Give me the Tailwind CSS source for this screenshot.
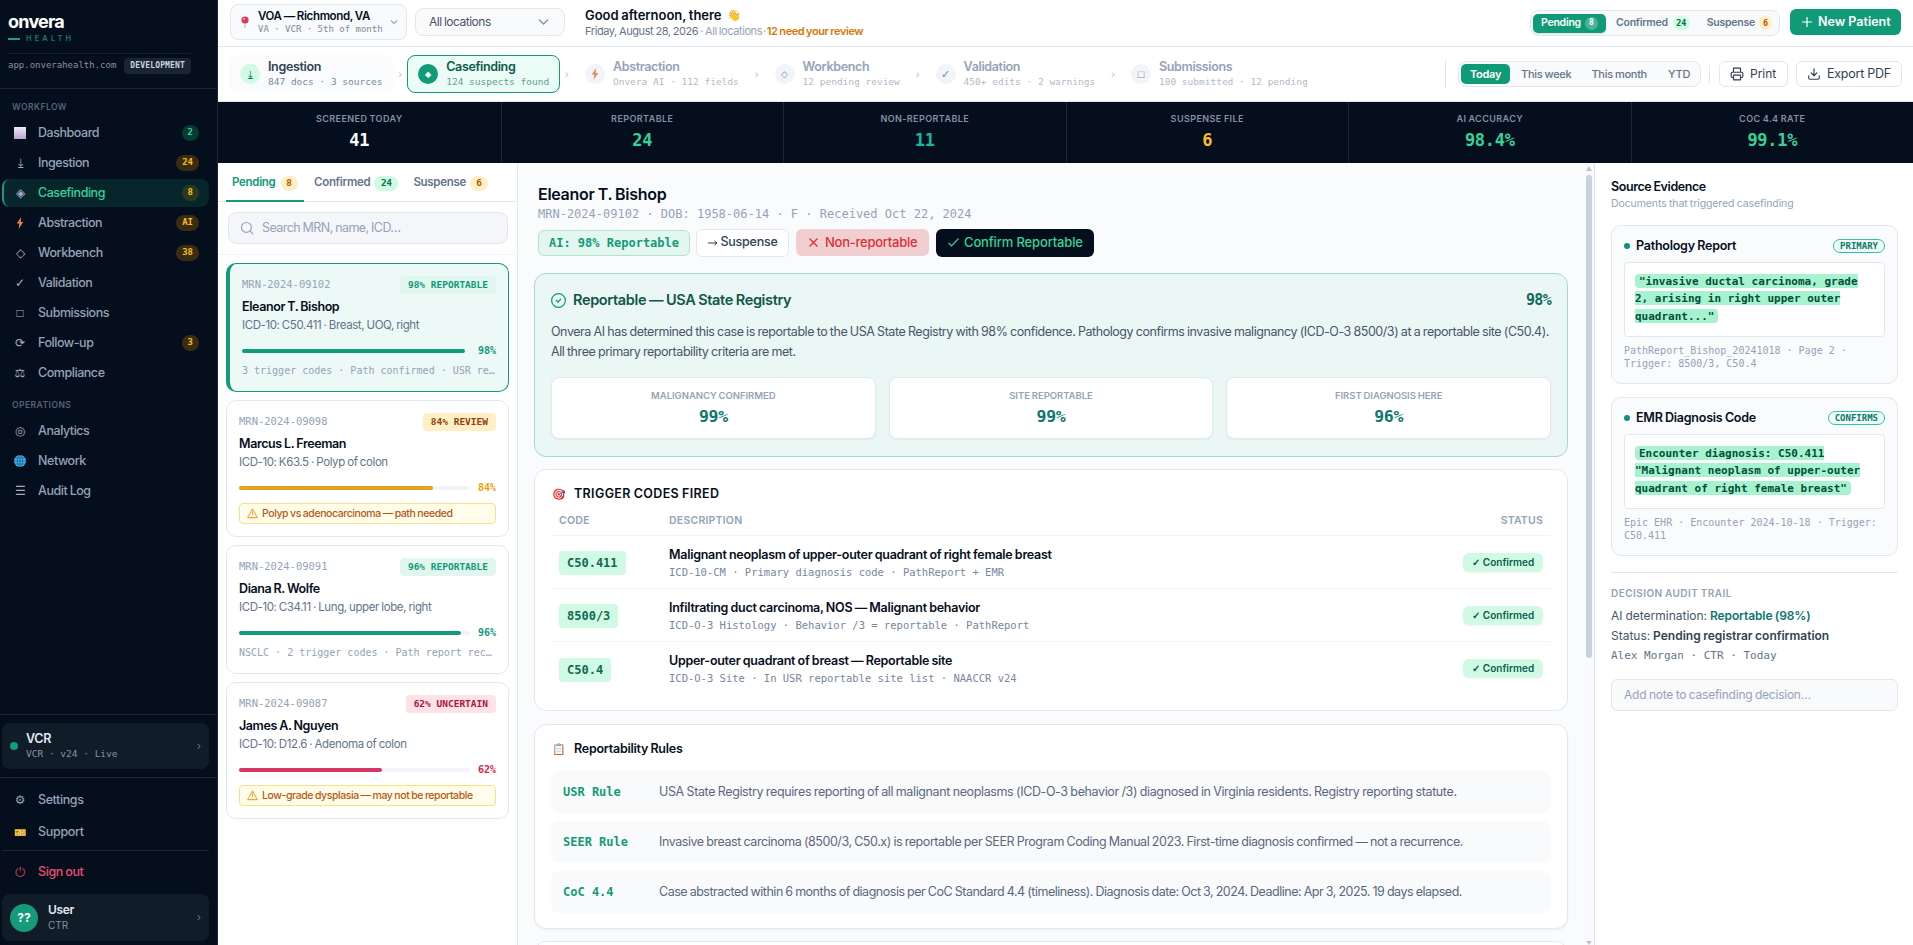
<!DOCTYPE html>
<html lang="en">

<head>
    <meta charset="UTF-8">
    <meta name="viewport" content="width=device-width, initial-scale=1.0">
    <title>Onvera Health - Casefinding</title>
    <script src="https://cdn.jsdelivr.net/npm/@tailwindcss/browser@4"></script>
</head>

<body class="flex w-[1913px] h-[945px] overflow-hidden bg-white font-[Inter,sans-serif] [word-spacing:-0.5px] text-[#050e1c]">

    <!-- Sidebar -->
    <aside class="w-[218px] shrink-0 h-full flex flex-col bg-[#050e1c] border-r border-[#1c2634]">
        <div class="h-[89px] shrink-0 border-b border-[#1c2634] pl-2 pr-[26px] pt-[10px]">
            <div class="h-[22px] leading-[23px] text-[18px] font-bold text-white tracking-[-0.78px]">onvera</div>
            <div class="flex items-center gap-[6px] h-[12px] mt-[1px]">
                <span class="w-3 h-[2px] bg-[#1f9f82]"></span>
                <span class="text-[7.5px] leading-[12px] font-semibold tracking-[3.1px] text-[#1b7f6b]">HEALTH</span>
            </div>
            <div class="mt-[8px] border-t border-[#141e2c] pt-1 flex items-center justify-between">
                <span class="font-['DejaVu_Sans_Mono',monospace] text-[9px] text-[#8793a5]">app.onverahealth.com</span>
                <span class="h-4 leading-4 px-[6px] rounded bg-[#1a2432] font-['DejaVu_Sans_Mono',monospace] text-[8px] font-bold tracking-[0.15px] text-[#cbd5e1]">DEVELOPMENT</span>
            </div>
        </div>
        <div class="mt-3 h-3 pl-3 text-[8.5px] leading-[13px] font-semibold tracking-[0.47px] text-[#566378]">WORKFLOW</div>
        <nav id="nav-workflow" class="mt-[6px] flex flex-col gap-[2px]"></nav>
        <div class="mt-3 h-3 pl-3 text-[8.5px] leading-[13px] font-semibold tracking-[0.47px] text-[#566378]">OPERATIONS</div>
        <nav id="nav-operations" class="mt-[6px] flex flex-col gap-[2px]"></nav>

        <div class="mt-auto border-t border-[#1c2634] py-2 pl-[2px] pr-2">
            <div class="h-[46px] rounded-lg bg-[#111c29] flex items-center px-2">
                <span class="size-2 rounded-full bg-[#149b79]"></span>
                <div class="ml-2 flex-1">
                    <div class="text-[12.5px] leading-[15px] font-semibold tracking-[-0.3px] text-[#e2e8f0]">VCR</div>
                    <div class="font-['DejaVu_Sans_Mono',monospace] [word-spacing:0px] text-[9.5px] leading-[15px] text-[#8793a5]">VCR · v24 · Live</div>
                </div>
                <span class="text-[11px] text-[#64748b]">›</span>
            </div>
        </div>
        <div class="border-t border-[#1c2634] pt-[7px] pb-1 pl-[2px] pr-2">
            <div class="h-[30px] flex items-center pl-3 text-[12.5px] font-medium tracking-[-0.4px] text-[#94a3b8]"><span class="w-3 font-['DejaVu_Sans'] text-[12px] flex justify-center">⚙</span><span class="ml-3">Settings</span></div>
            <div class="mt-[2px] h-[30px] flex items-center pl-3 text-[12.5px] font-medium tracking-[-0.3px] text-[#94a3b8]"><span class="w-3 text-[10px] flex justify-center">🎫</span><span class="ml-3">Support</span></div>
            <div class="mt-[3px] border-t border-[#1c2634] h-[7px]"></div>
            <div class="h-[30px] flex items-center pl-3 pt-px text-[12.5px] font-medium tracking-[-0.4px] text-[#e5506f]"><span class="w-3 font-sans text-[13px] flex justify-center opacity-80">⏻</span><span class="ml-3">Sign out</span></div>
            <div class="mt-[7px] h-[47px] rounded-lg bg-[#111c29] flex items-center px-2">
                <span class="size-7 rounded-full bg-[#149b79] flex items-center justify-center text-[12px] font-bold text-white">??</span>
                <div class="ml-[10px] flex-1">
                    <div class="text-[12px] leading-[16px] font-semibold tracking-[-0.3px] text-[#e2e8f0]">User</div>
                    <div class="text-[10px] leading-[15px] text-[#8793a5]">CTR</div>
                </div>
                <span class="text-[11px] text-[#64748b]">›</span>
            </div>
        </div>
    </aside>

    <div class="flex-1 min-w-0 flex flex-col">
        <!-- Top bar -->
        <header class="h-[47px] shrink-0 border-b border-[#e2e8f0] flex items-center px-3 pb-[2px]">
            <div class="w-[177px] h-9 rounded-lg border border-[#e2e8f0] bg-[#f8fafc] flex items-center pl-[8px] pr-2">
                <svg class="w-3 h-[12px]" viewBox="0 0 12 12"><path d="M5.600 6h.8v6h-.8z" fill="#9aa3ad" /><circle cx="6" cy="4" r="3.600" fill="#dc3a5e" /><circle cx="5" cy="3" r="1" fill="#f59ab0" /></svg>
                <div class="ml-[7px] flex-1">
                    <div class="text-[11.5px] leading-[14px] font-semibold tracking-[-0.36px] whitespace-nowrap">VOA — Richmond, VA</div>
                    <div class="font-['DejaVu_Sans_Mono',monospace] [word-spacing:0px] text-[9px] leading-[13px] text-[#7c899b] whitespace-nowrap">VA · VCR · 5th of month</div>
                </div>
                <svg class="size-2" viewBox="0 0 8 8" fill="none" stroke="#94a3b8" stroke-width="1.1"><path d="M1 2.5l3 3 3-3" /></svg>
            </div>
            <div class="ml-2 w-[150px] h-[28px] rounded-lg border border-[#e2e8f0] bg-[#f8fafc] flex items-center justify-between pl-[13px] pr-[15px]">
                <span class="text-[12px] tracking-[-0.5px] text-[#475569]">All locations</span>
                <svg class="w-[11px] h-[8px]" viewBox="0 0 11 8" fill="none" stroke="#8492a6" stroke-width="1.3"><path d="M1 1.5l4.5 4.5L10 1.5" /></svg>
            </div>
            <div class="ml-5">
                <div class="text-[13px] leading-[17px] font-semibold tracking-[-0.03px] flex items-center">Good afternoon, there <span class="ml-[5px] text-[11px]">👋</span></div>
                <div class="text-[11px] leading-[14px] tracking-[-0.42px] text-[#64748b] flex whitespace-nowrap">Friday, August 28, 2026<span class="text-[#94a3b8] ml-[2px]">·</span><span class="ml-[2px] text-[#94a3b8]">All locations</span><span class="text-[#94a3b8] ml-[1px]">·</span><span class="ml-[1px] font-semibold text-[#d97706]">12 need your review</span></div>
            </div>
            <div class="ml-auto w-[250px] h-[26px] mt-[2px] rounded-lg border border-[#e2e8f0] bg-[#f8fafc] flex items-center pl-[2px] text-[10.5px] font-semibold tracking-[-0.25px] text-[#64748b]">
                <span class="h-[19px] w-[73px] rounded-[5px] bg-[#119a77] text-white flex items-center pl-2 shadow-sm">Pending<span class="ml-1 w-[13px] h-[13px] rounded-full bg-white/25 flex items-center justify-center font-['DejaVu_Sans_Mono',monospace] text-[8px] font-bold">8</span></span>
                <span class="ml-[10px] flex items-center">Confirmed<span class="ml-[5px] w-[17px] h-[14px] rounded-full bg-[#d1fae5] flex items-center justify-center font-['DejaVu_Sans_Mono',monospace] text-[8.5px] font-bold text-[#067052]">24</span></span>
                <span class="ml-[17px] flex items-center">Suspense<span class="ml-[4px] w-[13px] h-[14px] rounded-full bg-[#fef0c4] flex items-center justify-center font-['DejaVu_Sans_Mono',monospace] text-[8.5px] font-bold text-[#b45309]">6</span></span>
            </div>
            <button class="ml-[10px] w-[111px] h-[26px] rounded-md bg-[#119a77] text-white text-[12.5px] font-semibold flex items-center pl-3">
                <svg class="size-[10px]" viewBox="0 0 10 10" stroke="currentColor" stroke-width="1.2"><path d="M5 0v10M0 5h10" /></svg>
                <span class="ml-[6px]">New Patient</span>
            </button>
        </header>

        <!-- Pipeline steps -->
        <div class="h-[55px] shrink-0 border-b border-[#e2e8f0] flex items-center pl-[11px] pr-[11px]">
            <div id="steps" class="flex items-center"></div>
            <div class="ml-auto w-px h-7 bg-[#e2e8f0]"></div>
            <div class="ml-[12px] w-[243px] h-[26px] rounded-lg border border-[#e2e8f0] bg-[#f8fafc] flex items-center pl-[2px] text-[11px] font-medium tracking-[-0.28px] text-[#64748b]">
                <span class="w-[49px] h-[20px] rounded-[5px] bg-[#119a77] text-white font-semibold flex items-center justify-center">Today</span>
                <span class="ml-[11px]">This week</span>
                <span class="ml-[20px]">This month</span>
                <span class="ml-[21px]">YTD</span>
            </div>
            <div class="ml-[8px] w-px h-[18px] bg-[#e2e8f0]"></div>
            <button class="ml-[9px] w-[69px] h-[26px] rounded-md border border-[#e2e8f0] flex items-center pl-[10px] text-[12px] text-[#334155]">
                <svg class="size-[14px]" viewBox="0 0 24 24" fill="none" stroke="currentColor" stroke-width="2" stroke-linejoin="round"><path d="M6 9V2h12v7M6 18H4a2 2 0 0 1-2-2v-5a2 2 0 0 1 2-2h16a2 2 0 0 1 2 2v5a2 2 0 0 1-2 2h-2M6 14h12v8H6z" /></svg>
                <span class="ml-[6px]">Print</span>
            </button>
            <button class="ml-2 w-[106px] h-[26px] rounded-md border border-[#e2e8f0] flex items-center pl-[10px] text-[12.5px] tracking-[-0.25px] text-[#334155]">
                <svg class="size-[14px]" viewBox="0 0 24 24" fill="none" stroke="currentColor" stroke-width="2" stroke-linecap="round" stroke-linejoin="round"><path d="M21 15v4a2 2 0 0 1-2 2H5a2 2 0 0 1-2-2v-4M7 10l5 5 5-5M12 15V3" /></svg>
                <span class="ml-[6px]">Export PDF</span>
            </button>
        </div>

        <!-- KPI strip -->
        <div id="kpis" class="h-[61px] shrink-0 bg-[#050e1c] grid grid-cols-6"></div>

        <div class="flex-1 min-h-0 flex">
            <!-- Case list -->
            <section class="w-[300px] shrink-0 border-r border-[#e2e8f0]">
                <div class="h-[39px] border-b border-[#e2e8f0] flex items-center pl-2 text-[11.5px] font-semibold tracking-[-0.3px] text-[#64748b]">
                    <div class="h-[39px] w-[78px] pl-[6px] pt-[4px] border-b-2 border-[#119a77] text-[#119a77] flex items-center">Pending<span class="ml-[5px] w-[17px] h-[15px] rounded-full bg-[#fef0c4] flex items-center justify-center font-['DejaVu_Sans_Mono',monospace] text-[9.5px] font-bold text-[#b45309]">8</span></div>
                    <div class="ml-[10px] pt-[2px] flex items-center">Confirmed<span class="ml-[4px] w-[24px] h-[15px] rounded-full bg-[#d1fae5] flex items-center justify-center font-['DejaVu_Sans_Mono',monospace] text-[9.5px] font-bold text-[#067052]">24</span></div>
                    <div class="ml-[15px] pt-[2px] flex items-center">Suspense<span class="ml-[4px] w-[18px] h-[15px] rounded-full bg-[#fef0c4] flex items-center justify-center font-['DejaVu_Sans_Mono',monospace] text-[9.5px] font-bold text-[#b45309]">6</span></div>
                </div>
                <div class="h-[53px] border-b border-[#f1f5f9] pt-[10px] pl-[10px] pr-[9px]">
                    <div class="h-8 rounded-lg border border-[#e2e8f0] bg-[#f4f6fa] flex items-center pl-[11px] text-[12.5px] tracking-[-0.56px] text-[#94a3b8]">
                        <svg class="size-[14px]" viewBox="0 0 24 24" fill="none" stroke="currentColor" stroke-width="2" stroke-linecap="round"><circle cx="11" cy="11" r="8.5" /><path d="M22 22l-4.5-4.5" /></svg>
                        <span class="ml-2">Search MRN, name, ICD…</span>
                    </div>
                </div>
                <div id="cases" class="pt-2 pl-2 pr-2 flex flex-col gap-[8.5px]"></div>
            </section>

            <!-- Case detail -->
            <main class="flex-1 min-w-0 flex bg-[#fafbfd] overflow-hidden">
                <div class="flex-1 min-w-0 pl-4 pr-[18px] pt-[19px]">
                    <div class="pl-1">
                        <h1 class="text-[16px] leading-[24px] font-semibold tracking-[-0.3px]">Eleanor T. Bishop</h1>
                        <div class="font-['DejaVu_Sans_Mono',monospace] [word-spacing:0px] text-[12px] leading-4 text-[#94a3b8]">MRN-2024-09102 · DOB: 1958-06-14 · F · Received Oct 22, 2024</div>
                        <div class="mt-[7px] h-[27px] flex items-center text-[13px] font-medium">
                            <span class="w-[152px] h-[26px] rounded-md border border-[#b0e2d0] bg-[#e4f6f0] flex items-center justify-center font-['DejaVu_Sans_Mono',monospace] [word-spacing:0px] text-[12px] font-bold text-[#119a77]">AI: 98% Reportable</span>
                            <button class="ml-[6px] w-[93px] h-[28px] rounded-md border border-[#e2e8f0] bg-white flex items-center justify-center gap-[3px] text-[12.5px] tracking-[-0.25px] text-[#334155]"><svg class="w-[10px] h-[6px]" viewBox="0 0 10 6" fill="none" stroke="currentColor"><path d="M0 3h9M6.500 1L9 3 6.500 5" /></svg>Suspense</button>
                            <button class="ml-[7px] w-[133px] h-[27px] rounded-md bg-[#f1cfd1] text-[#dc2f34] flex items-center pl-[13px] tracking-[-0.25px]">
                                <svg class="size-[9px]" viewBox="0 0 9 9" stroke="currentColor" stroke-width="1.2"><path d="M.5.5l8 8M8.500.5l-8 8" /></svg>
                                <span class="ml-[7px]">Non-reportable</span>
                            </button>
                            <button class="ml-[7px] w-[158px] h-[28px] rounded-md bg-[#050e1c] text-[#34d399] flex items-center pl-[12px] tracking-[-0.15px]">
                                <svg class="w-[11px] h-[9px]" viewBox="0 0 11 9" fill="none" stroke="currentColor" stroke-width="1.2"><path d="M.5 5l3 3L10.500.5" /></svg>
                                <span class="ml-[5px]">Confirm Reportable</span>
                            </button>
                        </div>
                    </div>

                    <div class="mt-[17px] h-[184px] rounded-xl border border-[#a7d8c8] bg-[#ebf7f5] px-4 pt-[14px]">
                        <div class="h-6 flex items-center">
                            <svg class="size-[15px]" viewBox="0 0 24 24" fill="none" stroke="#119a77" stroke-width="2" stroke-linecap="round" stroke-linejoin="round"><circle cx="12" cy="12" r="11" /><path d="M8.500 12l2.500 2.500 4.500-4.500" /></svg>
                            <span class="ml-[7px] text-[14.5px] font-semibold tracking-[-0.35px] text-[#0f5548]">Reportable — USA State Registry</span>
                            <span class="ml-auto font-['DejaVu_Sans_Mono',monospace] text-[15px] font-bold tracking-[-0.7px] text-[#0f6b5c]">98%</span>
                        </div>
                        <p class="mt-[10px] text-[12.5px] leading-[20.2px] tracking-[-0.435px] text-[#475569]"><span class="whitespace-nowrap">Onvera AI has determined this case is reportable to the USA State Registry with 98% confidence. Pathology confirms invasive malignancy (ICD-O-3 8500/3) at a reportable site (C50.4).</span><br>All three primary reportability criteria are met.</p>
                        <div id="criteria" class="mt-[14.600px] grid grid-cols-3 gap-[13px]"></div>
                    </div>

                    <div class="mt-3 h-[242px] rounded-xl border border-[#e2e8f0] bg-white px-4 pt-[16px]">
                        <div class="h-4 flex items-center pl-[2px]"><span class="w-3 text-[11px] flex justify-center">🎯</span><span class="ml-[9px] text-[12.5px] font-semibold tracking-[0.35px]">TRIGGER CODES FIRED</span></div>
                        <div class="h-[34px] border-b border-[#f1f5f9] pt-[5px] flex items-center px-2 text-[10.5px] font-semibold tracking-[0.22px] text-[#94a3b8]">
                            <span class="w-[110px]">CODE</span><span>DESCRIPTION</span><span class="ml-auto">STATUS</span>
                        </div>
                        <div id="codes" class="divide-y divide-[#f1f5f9]"></div>
                    </div>

                    <div class="mt-[13px] h-[205px] rounded-xl border border-[#e2e8f0] bg-white shadow-xs px-4 pt-4">
                        <div class="h-4 flex items-center pl-[2px]"><span class="w-3 text-[11px] flex justify-center">📋</span><span class="ml-[9px] text-[12.5px] font-semibold tracking-[-0.25px]">Reportability Rules</span></div>
                        <div id="rules" class="mt-[14px] flex flex-col gap-2"></div>
                    </div>
                    <div class="mt-[12px] h-10 rounded-xl border border-[#e2e8f0] bg-white"></div>
                </div>
                <!-- Scrollbar -->
                <div class="w-[8px] shrink-0 flex flex-col items-start bg-[#f8fafc]">
                    <svg class="mt-[3px] w-[6px] h-[5px]" viewBox="0 0 6 5" fill="#c0c5cc"><path d="M3 0l3 5H0z" /></svg>
                    <div class="mt-[4px] w-[6px] h-[483px] rounded-full bg-[#c8d3df]"></div>
                    <svg class="mt-auto w-[6px] h-[4px]" viewBox="0 0 6 4" fill="#c0c5cc"><path d="M0 0h6L3 4z" /></svg>
                </div>
            </main>

            <!-- Evidence panel -->
            <section class="w-[319px] shrink-0 border-l border-[#dbe3ec] pl-4 pr-[15px] pt-[15px]">
                <div class="text-[12.5px] leading-[18px] font-semibold tracking-[-0.42px]">Source Evidence</div>
                <div class="text-[10.5px] leading-[16px] tracking-[-0.1px] text-[#94a3b8]">Documents that triggered casefinding</div>
                <div id="evidence" class="mt-[13px] flex flex-col gap-[13px]"></div>
                <div class="mt-[16px] border-t border-[#e2e8f0]"></div>
                <div class="mt-[13px] text-[10px] leading-[14px] font-semibold tracking-[0.45px] text-[#94a3b8]">DECISION AUDIT TRAIL</div>
                <div class="mt-[6px] text-[12px] leading-[20px] text-[#475569]">AI determination: <b class="font-semibold tracking-[-0.1px] text-[#0f766e]">Reportable (98%)</b></div>
                <div class="text-[12px] leading-[20px] text-[#475569]">Status: <b class="font-semibold text-[#334155]">Pending registrar confirmation</b></div>
                <div class="font-['DejaVu_Sans_Mono',monospace] [word-spacing:0px] text-[11px] leading-[19px] text-[#64748b]">Alex Morgan · CTR · Today</div>
                <div class="mt-[14px] h-[32px] rounded-md border border-[#e2e8f0] bg-[#f8fafc] flex items-center pl-3 text-[12px] tracking-[-0.24px] text-[#94a3b8]">Add note to casefinding decision…</div>
            </section>
        </div>
    </div>

    <script>
        const amber = 'bg-[#3a2c12] text-[#fbbf24]';
        const green = 'bg-[#063a33] text-[#34d399]';

        const bolt = '<svg class="w-[8px] h-[12px]" viewBox="0 0 8 12" fill="#ef8450"><path d="M5.200 0L.8 6.600h2.600L2.600 12l4.600-7H4.600z" /></svg>';
        const globe = '<svg class="size-3" viewBox="0 0 12 12" fill="none" stroke="#12608f" stroke-width=".7"><circle cx="6" cy="6" r="6" fill="#46b1ef" stroke="none" /><ellipse cx="6" cy="6" rx="2.700" ry="5.700" /><path d="M6 0v12M0 6h12M1 3h10M1 9h10" /></svg>';

        const workflow = [
            { icon: '<span class="size-3 bg-linear-to-b from-[#f3e8fb] to-[#b9a5d0]"></span>', label: 'Dashboard', badge: '2', tone: green },
            { icon: '⤓', label: 'Ingestion', badge: '24', tone: amber },
            { icon: '◈', label: 'Casefinding', badge: '8', tone: 'bg-[#2a3a1e] text-[#fbbf24]', active: true },
            { icon: bolt, label: 'Abstraction', badge: 'AI', tone: amber },
            { icon: '◇', label: 'Workbench', badge: '38', tone: amber },
            { icon: '✓', label: 'Validation' },
            { icon: '□', label: 'Submissions' },
            { icon: '⟳', label: 'Follow-up', badge: '3', tone: amber },
            { icon: '<span class="font-[\'DejaVu_Sans\']">⚖</span>', label: 'Compliance' }
        ];
        const operations = [
            { icon: '◎', label: 'Analytics' },
            { icon: globe, label: 'Network' },
            { icon: '☰', label: 'Audit Log' }
        ];

        function navItem(item) {
            const state = item.active
                ? 'bg-[#07262b] border-[#149b79] text-[#34d399]'
                : 'border-transparent text-[#94a3b8]';
            const badge = item.badge
                ? `<span class="ml-auto h-4 min-w-[17px] px-[6px] rounded-full flex items-center justify-center font-['DejaVu_Sans_Mono',monospace] text-[9px] font-bold tracking-normal ${item.tone}">${item.badge}</span>`
                : '';
            return `<a class="ml-[2px] w-[207px] h-7 rounded-lg border-l-2 pl-[10px] pr-[10px] flex items-center text-[12.5px] font-medium tracking-[-0.45px] ${state}">
                <span class="w-3 font-sans text-[12px] flex justify-center text-[#a3afc0] tracking-normal">${item.icon}</span><span class="ml-3 pt-px">${item.label}</span>${badge}</a>`;
        }
        document.getElementById('nav-workflow').innerHTML = workflow.map(navItem).join('');
        document.getElementById('nav-operations').innerHTML = operations.map(navItem).join('');

        const steps = [
            { icon: '⤓', title: 'Ingestion', sub: '847 docs · 3 sources', state: 'done' },
            { icon: '<span class="text-[8px]">◆</span>', title: 'Casefinding', sub: '124 suspects found', state: 'active' },
            { icon: bolt, title: 'Abstraction', sub: 'Onvera AI · 112 fields' },
            { icon: '<span class="text-[9px]">◇</span>', title: 'Workbench', sub: '12 pending review' },
            { icon: '✓', title: 'Validation', sub: '450+ edits · 2 warnings' },
            { icon: '□', title: 'Submissions', sub: '100 submitted · 12 pending' }
        ];
        const stepStyles = {
            done: { box: 'border-transparent bg-[#fafbfc]', dot: 'bg-[#d1fae5] text-[#067052]', title: 'text-[#334155]', sub: 'text-[#7c899b]' },
            active: { box: 'border-[#149b79] bg-[#ebfbf5]', dot: 'bg-[#119a77] text-white', title: 'text-[#0b5a48]', sub: 'text-[#5f9f92]' },
            next: { box: 'border-transparent', dot: 'bg-[#f1f4f9] text-[#7c8aa0]', title: 'text-[#94a3b8]', sub: 'text-[#b0bac8]' }
        };
        document.getElementById('steps').innerHTML = steps.map(s => {
            const c = stepStyles[s.state || 'next'];
            return `<div class="h-[38px] rounded-lg border flex items-center px-[10px] ${c.box}">
                <span class="size-5 rounded-full flex items-center justify-center font-sans text-[11px] ${c.dot}">${s.icon}</span>
                <div class="ml-2">
                    <div class="text-[12.5px] leading-[16px] font-semibold tracking-[-0.35px] ${c.title}">${s.title}</div>
                    <div class="font-['DejaVu_Sans_Mono',monospace] [word-spacing:0px] text-[9.5px] leading-[14px] whitespace-nowrap ${c.sub}">${s.sub}</div>
                </div>
            </div>`;
        }).join('<span class="w-[13.800px] text-center text-[10px] text-[#b6c1cf]">›</span>');

        const kpis = [
            ['SCREENED TODAY', '41', 'text-white'],
            ['REPORTABLE', '24', 'text-[#34d399]'],
            ['NON-REPORTABLE', '11', 'text-[#14b8a6]'],
            ['SUSPENSE FILE', '6', 'text-[#fbbf24]'],
            ['AI ACCURACY', '98.4%', 'text-[#34d399]'],
            ['COC 4.4 RATE', '99.1%', 'text-[#34d399]']
        ];
        document.getElementById('kpis').innerHTML = kpis.map(([label, value, color]) => `
            <div class="border-l border-[#1c2634] first:border-l-0 pt-[10px] text-center">
                <div class="text-[9px] leading-[14px] font-semibold tracking-[0.42px] text-[#8391a6]">${label}</div>
                <div class="mt-[3px] font-['DejaVu_Sans_Mono',monospace] text-[17px] leading-[22px] font-bold tracking-[-0.3px] ${color}">${value}</div>
            </div>`).join('');

        const cases = [
            { mrn: 'MRN-2024-09102', tag: '98% REPORTABLE', tagTone: 'bg-[#e0f6ef] text-[#119a77]', name: 'Eleanor T. Bishop', icd: 'ICD-10: C50.411 · Breast, UOQ, right', pct: 98, bar: 'bg-[#149b79]', pctTone: 'text-[#119a77]', note: '3 trigger codes · Path confirmed · USR re…', active: true },
            { mrn: 'MRN-2024-09098', tag: '84% REVIEW', tagTone: 'bg-[#fef0c4] text-[#92400e]', name: 'Marcus L. Freeman', icd: 'ICD-10: K63.5 · Polyp of colon', pct: 84, bar: 'bg-[#e6a023]', pctTone: 'text-[#f59e0b]', alert: 'Polyp vs adenocarcinoma — path needed' },
            { mrn: 'MRN-2024-09091', tag: '96% REPORTABLE', tagTone: 'bg-[#e0f6ef] text-[#119a77]', name: 'Diana R. Wolfe', icd: 'ICD-10: C34.11 · Lung, upper lobe, right', pct: 96, bar: 'bg-[#149b79]', pctTone: 'text-[#119a77]', note: 'NSCLC · 2 trigger codes · Path report rec…' },
            { mrn: 'MRN-2024-09087', tag: '62% UNCERTAIN', tagTone: 'bg-[#fde2e7] text-[#b0123f]', name: 'James A. Nguyen', icd: 'ICD-10: D12.6 · Adenoma of colon', pct: 62, bar: 'bg-[#d63663]', pctTone: 'text-[#e11d48]', alert: 'Low-grade dysplasia — may not be reportable' }
        ];
        document.getElementById('cases').innerHTML = cases.map(c => `
            <div class="rounded-[10px] border p-3 ${c.active ? 'border-[#149b79] border-l-4 bg-[#edf9f6]' : 'border-[#e2e8f0] bg-white'}">
                <div class="h-[18px] flex items-center justify-between font-['DejaVu_Sans_Mono',monospace] [word-spacing:0px]">
                    <span class="text-[10.500px] text-[#94a3b8]">${c.mrn}</span>
                    <span class="h-[18px] leading-[18px] px-2 rounded text-[9.5px] font-bold ${c.tagTone}">${c.tag}</span>
                </div>
                <div class="mt-[4px] text-[12.5px] leading-[18px] font-semibold tracking-[-0.4px]">${c.name}</div>
                <div class="text-[11.5px] leading-[18px] tracking-[-0.4px] text-[#64748b]">${c.icd}</div>
                <div class="mt-[9px] h-[15px] flex items-center">
                    <div class="flex-1 h-1 rounded-full bg-[#f1f5f9]"><div class="h-1 rounded-full ${c.bar}" style="width:${c.pct}%"></div></div>
                    <span class="w-[26px] text-right font-['DejaVu_Sans_Mono',monospace] text-[10px] font-bold ${c.pctTone}">${c.pct}%</span>
                </div>
                ${c.note
                    ? `<div class="mt-[6px] whitespace-nowrap font-['DejaVu_Sans_Mono',monospace] [word-spacing:0px] text-[10px] leading-[14.600px] text-[#94a3b8]">${c.note}</div>`
                    : `<div class="mt-[8px] h-[20.600px] rounded border border-[#fbe08a] bg-[#fffdea] flex items-center pl-[7px] text-[10.5px] font-medium tracking-[-0.42px] text-[#b45a12]">
                        <svg class="size-[11px] mr-[4px]" viewBox="0 0 24 24" fill="none" stroke="#f0a43a" stroke-width="2.200" stroke-linejoin="round" stroke-linecap="round"><path d="M12 2L1.500 21h21zM12 9v5M12 17.500v.1" /></svg>${c.alert}</div>`}
            </div>`).join('');

        const criteria = [['MALIGNANCY CONFIRMED', '99%'], ['SITE REPORTABLE', '99%'], ['FIRST DIAGNOSIS HERE', '96%']];
        document.getElementById('criteria').innerHTML = criteria.map(([label, value]) => `
            <div class="h-[62px] rounded-lg border border-[#e0e9ee] bg-white shadow-xs pt-[10px] text-center">
                <div class="text-[9.5px] leading-[15px] font-semibold tracking-[-0.03px] text-[#94a3b8]">${label}</div>
                <div class="mt-[4px] font-['DejaVu_Sans_Mono',monospace] text-[16.5px] leading-[20px] font-bold tracking-[-0.3px] text-[#0f766e]">${value}</div>
            </div>`).join('');

        const codes = [
            ['C50.411', 'Malignant neoplasm of upper-outer quadrant of right female breast', 'ICD-10-CM · Primary diagnosis code · PathReport + EMR'],
            ['8500/3', 'Infiltrating duct carcinoma, NOS — Malignant behavior', 'ICD-O-3 Histology · Behavior /3 = reportable · PathReport'],
            ['C50.4', 'Upper-outer quadrant of breast — Reportable site', 'ICD-O-3 Site · In USR reportable site list · NAACCR v24']
        ];
        document.getElementById('codes').innerHTML = codes.map(([code, title, sub]) => `
            <div class="h-[53px] flex items-center px-2">
                <div class="w-[110px]"><span class="inline-block h-6 leading-6 px-2 rounded bg-[#d1fae5] font-['DejaVu_Sans_Mono',monospace] text-[12px] font-bold text-[#0f6b52]">${code}</span></div>
                <div class="pt-[2px]">
                    <div class="text-[12.5px] leading-[17px] font-semibold tracking-[-0.27px]">${title}</div>
                    <div class="font-['DejaVu_Sans_Mono',monospace] [word-spacing:0px] text-[10.5px] leading-[18px] text-[#7886a0]">${sub}</div>
                </div>
                <span class="ml-auto w-20 h-[19px] rounded-[6px] bg-[#d1fae5] shadow-xs flex items-center justify-center text-[10px] font-semibold text-[#065f46]"><span class="mr-[3px] font-sans">✓</span>Confirmed</span>
            </div>`).join('');

        const rules = [
            ['USR Rule', 'tracking-[-0.37px]', 'USA State Registry requires reporting of all malignant neoplasms (ICD-O-3 behavior /3) diagnosed in Virginia residents. Registry reporting statute.'],
            ['SEER Rule', 'tracking-[-0.44px]', 'Invasive breast carcinoma (8500/3, C50.x) is reportable per SEER Program Coding Manual 2023. First-time diagnosis confirmed — not a recurrence.'],
            ['CoC 4.4', 'tracking-[-0.48px]', 'Case abstracted within 6 months of diagnosis per CoC Standard 4.4 (timeliness). Diagnosis date: Oct 3, 2024. Deadline: Apr 3, 2025. 19 days elapsed.']
        ];
        document.getElementById('rules').innerHTML = rules.map(([label, tracking, text]) => `
            <div class="h-[42px] rounded-lg bg-[#f9fafc] flex items-center pl-3">
                <span class="w-24 font-['DejaVu_Sans_Mono',monospace] [word-spacing:0px] text-[12px] font-bold text-[#119a77]">${label}</span>
                <span class="text-[12.5px] text-[#5a687c] ${tracking}">${text}</span>
            </div>`).join('');

        const evidence = [
            { title: 'Pathology Report', tag: 'PRIMARY', quote: '"invasive ductal carcinoma, grade 2, arising in right upper outer quadrant..."', meta: 'PathReport_Bishop_20241018 · Page 2 · Trigger: 8500/3, C50.4' },
            { title: 'EMR Diagnosis Code', tag: 'CONFIRMS', quote: 'Encounter diagnosis: C50.411 "Malignant neoplasm of upper-outer quadrant of right female breast"', meta: 'Epic EHR · Encounter 2024-10-18 · Trigger: C50.411' }
        ];
        document.getElementById('evidence').innerHTML = evidence.map(e => `
            <div class="h-[159px] rounded-[10px] border border-[#e2e8f0] bg-[#f9fbfc] p-3">
                <div class="h-[16px] flex items-center">
                    <span class="size-[6px] rounded-full bg-[#0f8f80]"></span>
                    <span class="ml-[6px] text-[12.5px] font-semibold tracking-[-0.23px]">${e.title}</span>
                    <span class="ml-auto h-[14px] leading-[12px] px-[6px] rounded-full border border-[#2fc2a4] bg-[#effdf8] font-['DejaVu_Sans_Mono',monospace] text-[9px] font-bold text-[#0f766e]">${e.tag}</span>
                </div>
                <div class="mt-[8px] h-[75px] rounded border border-[#e2e8f0] bg-white px-[10px] pt-[9px] font-['DejaVu_Sans_Mono',monospace] [word-spacing:0px] text-[11px] leading-[17.600px] font-bold text-[#064e3b]"><span class="px-1 py-[0.5px] rounded bg-[#a7f3d0]">${e.quote}</span></div>
                <div class="mt-[7px] font-['DejaVu_Sans_Mono',monospace] [word-spacing:0px] text-[10px] leading-[13px] text-[#94a3b8]">${e.meta}</div>
            </div>`).join('');
    </script>
</body>

</html>
